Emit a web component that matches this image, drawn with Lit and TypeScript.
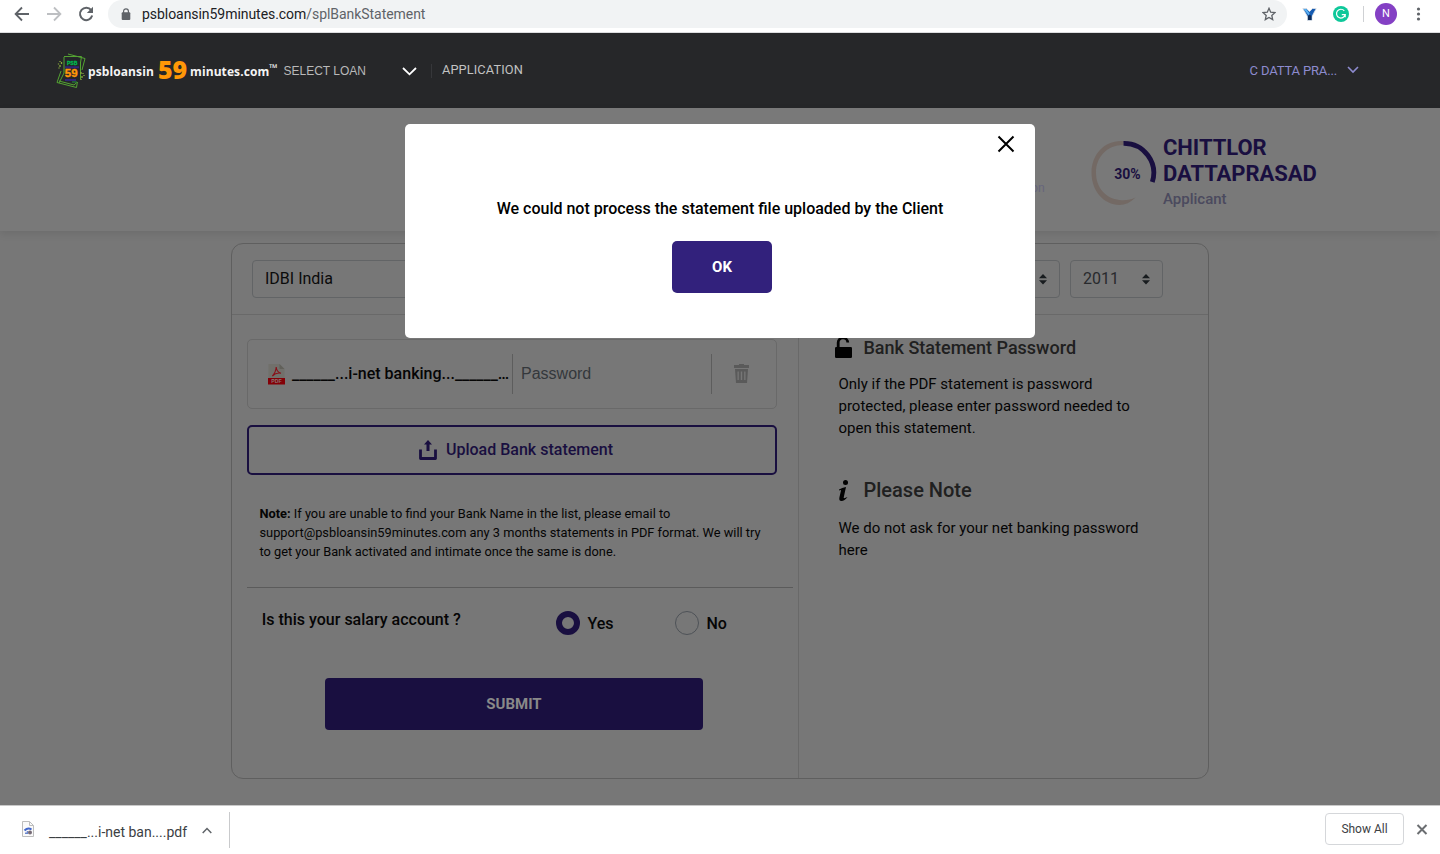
import { LitElement, html, css } from "lit";
import { customElement } from "lit/decorators.js";

const sorter = html`<svg class="sorter" width="8" height="11" viewBox="0 0 8 11"><path d="M4 0L8 4.3H0zM4 10.6L0 6.3H8z" fill="#181c1f" /></svg>`;

@customElement("browser-bar")
class BrowserBar extends LitElement {
  static styles = css`
    :host { display: flex; box-sizing: border-box; height: 33px; background: #fff; border-bottom: 1px solid #dcdddf; align-items: flex-start; font-family: Roboto, "Liberation Sans", sans-serif; }
    svg { flex: none; display: block; }
    .arrows { display: flex; gap: 16px; padding: 6px 0 0 14px; width: 108px; box-sizing: border-box; }
    .pill { width: 1179px; height: 28px; border-radius: 14px; background: #f1f3f4; display: flex; align-items: center; box-sizing: border-box; padding: 0 11px 0 13px; }
    .url { margin-left: 11px; font-size: 14px; line-height: 28px; color: #202124; letter-spacing: -0.05px; white-space: nowrap; flex: 1; }
    .path { color: #5f6368; }
    .right { display: flex; align-items: center; height: 28px; }
    .v { margin-left: 15px; }
    .g { margin-left: 16px; }
    .sep { width: 1px; height: 16px; background: #cfd1d4; margin-left: 14px; }
    .avatar { margin-left: 11px; width: 22px; height: 22px; border-radius: 50%; background: #8440c4; color: #fff; font-size: 11px; line-height: 22px; text-align: center; }
    .dots { margin-left: 19px; }
  `;
  render() {
    return html`
      <div class="arrows">
        <svg width="16" height="16" viewBox="0 0 16 16" fill="none" stroke="#5f6368" stroke-width="1.8"><path d="M15 8H2.2M8 1.5L1.6 8L8 14.5" /></svg>
        <svg width="16" height="16" viewBox="0 0 16 16" fill="none" stroke="#bdbfc2" stroke-width="1.8"><path d="M1 8H13.8M8 1.5L14.4 8L8 14.5" /></svg>
        <svg width="16" height="16" viewBox="0 0 16 16"><path d="M13.2 4.2A6.2 6.2 0 1 0 14.2 9.6" fill="none" stroke="#5f6368" stroke-width="2" /><path d="M15 .8V7H8.8z" fill="#5f6368" /></svg>
      </div>
      <div class="pill">
        <svg width="10" height="13" viewBox="0 0 10 13"><rect x=".7" y="4.2" width="8.6" height="7.8" rx="1" fill="#5f6368" /><path d="M2.6 5V3.2a2.4 2.4 0 0 1 4.8 0V5" fill="none" stroke="#5f6368" stroke-width="1.2" /></svg>
        <div class="url">psbloansin59minutes.com<span class="path">/splBankStatement</span></div>
        <svg width="14" height="14" viewBox="0 0 14 14"><path d="M7 1.3L8.7 5.2L13 5.6L9.8 8.4L10.7 12.6L7 10.4L3.3 12.6L4.2 8.4L1 5.6L5.3 5.2z" fill="none" stroke="#5f6368" stroke-width="1.3" /></svg>
      </div>
      <div class="right">
        <svg class="v" width="15" height="15" viewBox="0 0 15 15"><path d="M.8 1.500H4.500L7.500 4.500L10.500 1.500H14.200L10 9.500V13.500H5.500V9.500z" fill="#1c62b8" stroke="#dfe2e5" stroke-width=".8" /><path d="M1.500 2H4.500L7.400 6.500V9z" fill="#5ab0f2" /><path d="M7.400 9L13.500 2H10.500z" fill="#1659ae" /><path d="M5.900 9L7.500 7.500L9.500 9V13H5.900z" fill="#0c2b58" /></svg>
        <svg class="g" width="16" height="16" viewBox="0 0 16 16"><circle cx="8" cy="8" r="8" fill="#0ec89a" /><path d="M11.3 4.8A4.4 4.4 0 1 0 12.2 8.7H8.8M12.2 8.7V11.3" fill="none" stroke="#fff" stroke-width="1.2" /></svg>
        <div class="sep"></div>
        <div class="avatar">N</div>
        <svg class="dots" width="5" height="14" viewBox="0 0 5 14" fill="#5f6368"><circle cx="2.5" cy="2" r="1.6" /><circle cx="2.5" cy="7" r="1.6" /><circle cx="2.5" cy="12" r="1.6" /></svg>
      </div>`;
  }
}

@customElement("site-nav")
class SiteNav extends LitElement {
  static styles = css`
    :host { display: flex; box-sizing: border-box; height: 75px; background: #262729; padding: 20px 81px 0 56px; font-family: Roboto, "Liberation Sans", sans-serif; white-space: nowrap; }
    svg { display: block; flex: none; }
    .word { font: 700 12px/37px "Open Sans", "Noto Sans", sans-serif; color: #f4f4f4; margin-left: 2px; width: 70px; letter-spacing: 0.1px; }
    .big { font: 800 25px/32px "Open Sans", "Noto Sans", sans-serif; color: #ff9707; width: 32px; letter-spacing: -0.2px; }
    .mins { width: 79px; margin: 0; }
    .tm { font: 700 11px/30px "Open Sans", sans-serif; color: #f4f4f4; width: 14.5px; }
    .select { font: 12px/36px "Liberation Sans", sans-serif; color: #b9b9b9; width: 118.5px; }
    .chev { margin-top: 14px; }
    .sep { width: 1px; height: 14px; background: #36373a; margin: 11px 10px 0 14px; }
    .app { font-size: 12.8px; line-height: 34px; color: #c2c2c2; flex: 1; letter-spacing: 0.1px; }
    .user { font-size: 13px; line-height: 36px; color: #8d8bcf; margin-right: 10px; letter-spacing: -0.15px; }
    .uchev { margin-top: 13px; }
  `;
  render() {
    return html`
      <svg width="30" height="36" viewBox="0 0 30 36" fill="none">
        <path d="M12 1L29 5.5L26 17M8 3.5L25.5 3.5L20.5 34.5L1 29.5L5 18M8 4V20L3 30M24.5 9V26L18 32L3 28" stroke="#53a332" stroke-width="1" />
        <path d="M4 8v1M2.5 10.5v1M4 12v2M3 14.5v1M5.5 9v2M25 19v2M27 20v1M26 23v2M28 22v1M25 26v1" stroke="#8bab3e" stroke-width="1.3" />
        <rect x="9" y="5" width="15" height="24" fill="#232529" />
        <path d="M9 14.3H23M9 27H20" stroke="#322577" stroke-width="2" />
        <path d="M16 29H21" stroke="#237a39" stroke-width="1.3" />
        <text x="11" y="12.2" font-family="Liberation Sans" font-weight="700" font-size="5" fill="#00b84f" stroke="#00b84f" stroke-width=".3">PSB</text>
        <text x="8.8" y="24" font-family="Liberation Sans" font-weight="700" font-size="11.500" fill="#ff9707" stroke="#ff9707" stroke-width=".4">59</text>
      </svg>
      <div class="word">psbloansin</div>
      <div class="big">59</div>
      <div class="word mins">minutes.com</div>
      <div class="tm">™</div>
      <div class="select">SELECT LOAN</div>
      <svg class="chev" width="15" height="9" viewBox="0 0 15 9"><path d="M1 1L7.5 7.3L14 1" fill="none" stroke="#fff" stroke-width="1.8" /></svg>
      <div class="sep"></div>
      <div class="app">APPLICATION</div>
      <div class="user">C DATTA PRA...</div>
      <svg class="uchev" width="12" height="8" viewBox="0 0 12 8"><path d="M1 1L6 6L11 1" fill="none" stroke="#8d8bcf" stroke-width="1.6" /></svg>`;
  }
}

@customElement("applicant-header")
class ApplicantHeader extends LitElement {
  static styles = css`
    :host { display: flex; box-sizing: border-box; height: 123px; background: #797979; box-shadow: 0 3px 8px rgba(0, 0, 0, 0.09); font-family: Roboto, "Liberation Sans", sans-serif; position: relative; padding-left: 1031px; }
    .step { width: 60px; padding-top: 73px; font-size: 12.3px; line-height: 15px; color: #67667c; }
    .ring { margin-top: 32px; display: block; }
    .who { margin: 27px 0 0 6px; color: #190f40; }
    .name { font-weight: 700; font-size: 22px; line-height: 26px; letter-spacing: -0.05px; }
    .role { font-weight: 500; font-size: 15px; line-height: 24px; color: #4b4a5e; }
  `;
  render() {
    return html`
      <div class="step">on</div>
      <svg class="ring" width="66" height="66" viewBox="0 0 66 66">
        <path d="M32.500 1C14 -.5 .5 14 .5 32.500C.5 51 12.500 64.500 28.500 65C34 65 39.500 62.500 44.500 57.500C39.500 60 34 60.800 28.500 60C14.500 58.500 5 47.500 5 32.500C5 17 16 5 32.500 5z" fill="#736964" />
        <path d="M32.500 3.300A29.700 29.700 0 0 1 61.300 42" fill="none" stroke="#190f40" stroke-width="4.800" />
        <text x="23.3" y="39" font-family="Roboto" font-weight="700" font-size="14" fill="#190f40">30%</text>
      </svg>
      <div class="who">
        <div class="name">CHITTLOR<br />DATTAPRASAD</div>
        <div class="role">Applicant</div>
      </div>`;
  }
}

@customElement("statement-card")
class StatementCard extends LitElement {
  static styles = css`
    :host { display: block; box-sizing: border-box; width: 978px; height: 536px; margin: 12px 0 0 231px; border: 1px solid #5f5f5f; border-radius: 12px; font-family: Roboto, "Liberation Sans", sans-serif; color: #050505; }
    svg { display: block; flex: none; }
    .top { display: flex; gap: 10px; height: 71px; box-sizing: border-box; border-bottom: 1px solid #696969; padding: 16px 0 0 20px; }
    .field { box-sizing: border-box; height: 38px; border: 1px solid #626466; border-radius: 4px; display: flex; align-items: center; justify-content: space-between; padding: 0 12px; font-size: 16px; line-height: 34px; color: #0b0b0b; }
    .bank { width: 628px; }
    .month { width: 170px; }
    .year { width: 93px; color: #282a2d; }
    .body { display: flex; height: 463px; }
    .left { width: 567px; box-sizing: border-box; border-right: 1px solid #696969; padding: 24px 0 0 15px; }
    .right { padding: 19px 0 0 36px; }
    .file { box-sizing: border-box; width: 530px; height: 70px; border: 1px solid #696969; border-radius: 5px; display: flex; align-items: center; padding-left: 20px; }
    .fname { margin-left: 7px; width: 220px; padding-bottom: 2px; font-size: 16px; font-weight: 500; white-space: nowrap; color: #050505; }
    .bar { width: 1px; height: 40px; background: #5d5d5d; }
    .pass { width: 190px; padding-left: 8px; font: 16px "Liberation Sans", sans-serif; color: #34383c; }
    .trash { margin: 0 0 2px 22px; }
    .upload { box-sizing: border-box; width: 530px; height: 50px; margin-top: 16px; border: 2px solid #190f40; border-radius: 5px; display: flex; align-items: center; padding-left: 170px; color: #190f40; font-size: 16px; font-weight: 500; gap: 8px; }
    .upload span { padding-bottom: 2px; }
    .note { margin: 29px 0 0 12.500px; font-size: 12.8px; line-height: 19px; white-space: nowrap; }
    .note b { font-weight: 700; }
    .rule { width: 546px; height: 1px; margin-top: 26px; background: #5b5b5b; }
    .ask { display: flex; height: 90px; font-size: 16px; font-weight: 500; }
    .q { margin: 22px 0 0 14.800px; width: 294.200px; line-height: 20px; }
    .opt { display: flex; align-items: center; gap: 7.500px; width: 119px; height: 24px; margin-top: 23px; }
    .dot { box-sizing: border-box; width: 24px; height: 24px; border-radius: 50%; border: 1px solid #4e5257; }
    .on { border: 6px solid #190f40; }
    .submit { margin-left: 78px; width: 378px; height: 52px; border-radius: 4px; background: #190f40; color: #898989; font-size: 15px; font-weight: 700; line-height: 52px; text-align: center; }
    .head { display: flex; align-items: center; height: 26px; font-weight: 500; font-size: 18px; color: #202020; }
    .head svg { width: 17px; margin-right: 11.500px; }
    .para { margin: 13px 0 0 3.500px; font-size: 15px; line-height: 22px; white-space: nowrap; }
    .second { margin-top: 38px; font-size: 20px; }
    .para.last { margin-top: 14px; }
  `;
  render() {
    return html`
      <div class="top">
        <div class="field bank"><span>IDBI India</span></div>
        <div class="field month"><span></span>${sorter}</div>
        <div class="field year"><span>2011</span>${sorter}</div>
      </div>
      <div class="body">
        <div class="left">
          <div class="file">
            <svg width="17" height="21" viewBox="0 0 17 21"><path d="M.5 0H11.500L16.500 5V14H.500z" fill="#71706b" /><path d="M11.500 0V5H16.500z" fill="#61605a" /><rect y="14" width="17" height="6.500" fill="#840007" /><path d="M4.300 12Q8 8 8.200 3Q8.500 8 13 9.200Q8 8.300 4.300 12z" fill="none" stroke="#89111a" stroke-width="1.100" /><text x="3.200" y="19.300" font-family="Liberation Sans" font-weight="700" font-size="5.200" fill="#8b7474">PDF</text></svg>
            <div class="fname">______...i-net banking...______…</div>
            <div class="bar"></div>
            <div class="pass">Password</div>
            <div class="bar"></div>
            <svg class="trash" width="15" height="19" viewBox="0 0 15 19" fill="#5a5a5a"><path d="M5 0H10V1H15V4H0V1H5z" /><path fill-rule="evenodd" d="M1 5H14L13 19H2zM3.500 7.500V16H4.800V7.500zM6.800 7.500V16H8.200V7.500zM10.200 7.500V16H11.500V7.500z" /></svg>
          </div>
          <div class="upload">
            <svg width="19" height="20" viewBox="0 0 19 20"><path d="M1.500 9.500V18.500H16.500V9.500" fill="none" stroke="#190f40" stroke-width="2.800" stroke-linejoin="round" /><path d="M9 0L13 4.500H10.500V11H7.500V4.500H5z" fill="#190f40" /></svg>
            <span>Upload Bank statement</span>
          </div>
          <div class="note"><b>Note:</b> If you are unable to find your Bank Name in the list, please email to<br />support@psbloansin59minutes.com any 3 months statements in PDF format. We will try<br />to get your Bank activated and intimate once the same is done.</div>
          <div class="rule"></div>
          <div class="ask">
            <div class="q">Is this your salary account ?</div>
            <div class="opt"><div class="dot on"></div>Yes</div>
            <div class="opt"><div class="dot"></div>No</div>
          </div>
          <div class="submit">SUBMIT</div>
        </div>
        <div class="right">
          <div class="head"><svg width="17" height="21" viewBox="0 0 17 21"><rect y="10" width="17" height="11" rx="1.300" fill="#020202" /><path d="M3.200 11V6A4.800 4.800 0 0 1 12.800 5.500" fill="none" stroke="#020202" stroke-width="2.800" /></svg>Bank Statement Password</div>
          <div class="para">Only if the PDF statement is password<br />protected, please enter password needed to<br />open this statement.</div>
          <div class="head second"><svg width="17" height="21" viewBox="0 0 17 21" fill="#020202"><circle cx="10.500" cy="2.500" r="2.500" /><path d="M4 9.500Q7 7.500 11 7L8.700 17.500Q8.500 19 12.500 17Q9.500 21 6.500 21Q3.700 21 4.400 17.500L6 10.500Q6 9.700 4 10.500z" /></svg>Please Note</div>
          <div class="para last">We do not ask for your net banking password<br />here</div>
        </div>
      </div>`;
  }
}

@customElement("message-dialog")
class MessageDialog extends LitElement {
  static styles = css`
    :host { position: absolute; left: 405px; top: 124px; width: 630px; height: 214px; box-sizing: border-box; background: #fff; border-radius: 5px; font-family: Roboto, "Liberation Sans", sans-serif; display: flex; flex-direction: column; align-items: center; padding-top: 11px; }
    .close { align-self: flex-end; margin-right: 20px; display: block; }
    .msg { margin-top: 46px; font-size: 16px; font-weight: 500; line-height: 20px; color: #000; white-space: nowrap; }
    .ok { margin: 22px 0 0 4px; width: 100px; height: 52px; border-radius: 5px; background: #32217c; color: #fff; font-weight: 700; font-size: 15px; line-height: 52px; text-align: center; }
  `;
  render() {
    return html`
      <svg class="close" width="18" height="18" viewBox="0 0 18 18"><path d="M1.500 1.500L16.500 16.500M16.500 1.500L1.500 16.500" stroke="#000" stroke-width="2" /></svg>
      <div class="msg">We could not process the statement file uploaded by the Client</div>
      <div class="ok">OK</div>`;
  }
}

@customElement("download-shelf")
class DownloadShelf extends LitElement {
  static styles = css`
    :host { display: flex; box-sizing: border-box; height: 49px; background: #fff; border-top: 1px solid #c9c9c9; font-family: Roboto, "Liberation Sans", sans-serif; color: #3c4043; padding-right: 12px; }
    svg { display: block; flex: none; }
    .item { box-sizing: border-box; width: 230px; height: 36px; margin-top: 6px; border-right: 1px solid #c9cacc; display: flex; padding-left: 22px; }
    .doc { margin-top: 9px; }
    .name { margin-left: 15px; width: 153px; font-size: 14px; line-height: 40px; white-space: nowrap; }
    .up { margin-top: 15px; }
    .gap { flex: 1; }
    .all { box-sizing: border-box; width: 79px; height: 32px; margin-top: 7px; border: 1px solid #d5d7da; border-radius: 4px; font-size: 12px; line-height: 30px; text-align: center; }
    .x { margin: 18px 0 0 12px; }
  `;
  render() {
    return html`
      <div class="item">
        <svg class="doc" width="12" height="17" viewBox="0 0 12 17"><path d="M.500 .500H7.500L11.500 4.500V15.500H.500z" fill="#fafafa" stroke="#bdbdbd" /><path d="M7.500 .500V4.500H11.500" fill="none" stroke="#bdbdbd" /><path d="M2.500 9.500Q6 6 9.500 8.500" stroke="#4267cc" stroke-width="2" fill="none" /><path d="M3 12.200H5.500V10" stroke="#6b87cc" stroke-width="1.500" fill="none" /><circle cx="8" cy="11.500" r="2" fill="#756a75" /></svg>
        <div class="name">______...i-net ban....pdf</div>
        <svg class="up" width="10" height="7" viewBox="0 0 10 7"><path d="M.700 6L5 1.500L9.300 6" fill="none" stroke="#5f6368" stroke-width="1.500" /></svg>
      </div>
      <div class="gap"></div>
      <div class="all">Show All</div>
      <svg class="x" width="12" height="11" viewBox="0 0 12 11"><path d="M1.500 1L10.500 10M10.500 1L1.500 10" stroke="#6b6e71" stroke-width="2" /></svg>`;
  }
}

@customElement("app-root")
class AppRoot extends LitElement {
  static styles = css`
    :host { display: flex; flex-direction: column; position: relative; width: 1440px; height: 854px; overflow: hidden; background: #777; }
    main { height: 697px; flex: none; background: #777; }
  `;
  render() {
    return html`
      <browser-bar></browser-bar>
      <site-nav></site-nav>
      <main>
        <applicant-header></applicant-header>
        <statement-card></statement-card>
      </main>
      <download-shelf></download-shelf>
      <message-dialog></message-dialog>`;
  }
}
